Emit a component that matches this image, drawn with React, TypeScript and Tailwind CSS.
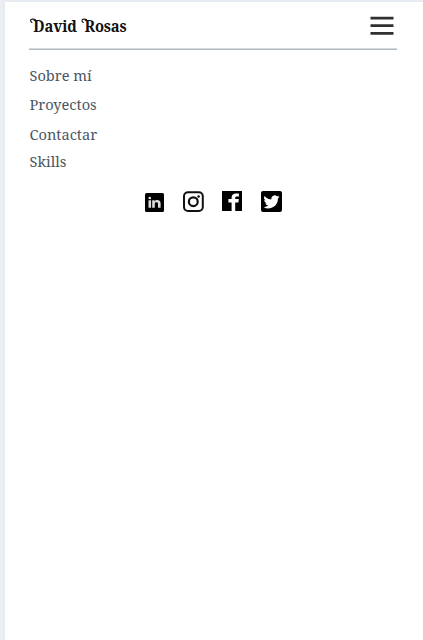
const links = [
  { label: 'Sobre mí', box: 'h-[29px]' },
  { label: 'Proyectos', box: 'h-[30px]' },
  { label: 'Contactar', box: 'h-[27px]' },
  { label: 'Skills', box: 'h-[29px]' },
];

function Menu() {
  return (
    <svg className="h-5 w-6" viewBox="0 0 24 20" stroke="#303030" strokeWidth="2.7" aria-hidden="true">
      <path d="M.5 2.2h23M.5 9.7h23M.5 17.3h23" />
    </svg>
  );
}

function Flourish() {
  return (
    <svg className="absolute top-[3px] left-0 h-[6px] w-[7px]" viewBox="0 0 7 6" fill="none" stroke="#111" strokeWidth="1.3" strokeLinecap="round" aria-hidden="true">
      <path d="M6.3 1.5C4 .8.8.7.8 2.6c0 1 .8 1.6 1.5 1.7" />
    </svg>
  );
}

function LinkedIn() {
  return (
    <svg className="mt-[2px] h-[19px] w-[19px]" viewBox="0 0 19 19" aria-label="LinkedIn">
      <rect width="19" height="19" rx="1.5" />
      <g fill="#ddd">
        <circle cx="4.8" cy="5" r="1.35" />
        <path d="M3.5 7.2h2.6v7.6H3.5zM7.2 7.2h2.4v1c1.3-1.8 6-1.7 6 2v4.6h-2.6v-4c0-2-3.2-1.9-3.2 0v4H7.2z" />
      </g>
    </svg>
  );
}

function Instagram() {
  return (
    <svg className="h-[21px] w-[21px]" viewBox="0 0 21 21" fill="none" stroke="#111" aria-label="Instagram">
      <rect x="1" y="1.2" width="18.8" height="18.8" rx="4" strokeWidth="2" />
      <circle cx="10.3" cy="10.7" r="4.4" strokeWidth="2.2" />
      <circle cx="15.6" cy="5.5" r="1.3" fill="#111" stroke="none" />
    </svg>
  );
}

function Facebook() {
  return (
    <svg className="h-5 w-5" viewBox="0 0 20 20" aria-label="Facebook">
      <rect width="20" height="20" />
      <path fill="#fff" d="M9.6 20v-8.6H6.4V8h3.2V6.7c0-2.9 1.9-4.2 4.3-4.2h3v3.1h-2c-1.3 0-1.7.5-1.7 1.5V8h3.6l-.4 3.4h-3.2V20z" />
    </svg>
  );
}

function Twitter() {
  return (
    <svg className="h-[21px] w-[21px]" viewBox="0 0 21 21" aria-label="Twitter">
      <rect width="21" height="21" rx="2" />
      <path
        fill="#fff"
        transform="translate(2.5 2.8) scale(.67)"
        d="M23.95 4.57a10 10 0 0 1-2.82.77 4.96 4.96 0 0 0 2.16-2.72 9.9 9.9 0 0 1-3.13 1.18 4.92 4.92 0 0 0-8.38 4.48A13.9 13.9 0 0 1 1.64 3.16a4.92 4.92 0 0 0 1.52 6.57 4.9 4.9 0 0 1-2.23-.61v.06a4.92 4.92 0 0 0 3.95 4.83 5 5 0 0 1-2.21.08 4.94 4.94 0 0 0 4.6 3.42A9.87 9.87 0 0 1 0 19.54a13.99 13.99 0 0 0 21.5-12.4 9.8 9.8 0 0 0 2.45-2.57z"
      />
    </svg>
  );
}

export default function App() {
  return (
    <div className="h-screen overflow-hidden bg-[#ebeff4] pt-[2px] pl-[5px]">
      <main className="h-full bg-white pr-[26px] pl-6 shadow-[0_0_3px_#dce2e9]">
        <header className="flex h-12 items-start justify-between border-b border-[#b4bbc0] pt-[14px] shadow-[inset_0_-1px_0_#d5dade]">
          <h1 className="-mt-px flex origin-left scale-x-[0.87] gap-[5px] pl-px font-['Noto_Serif',serif] text-[17px] leading-[21px] font-bold tracking-[-0.15px] text-[#111]">
            <span className="relative pl-1"><Flourish />David</span>{' '}
            <span className="relative pl-1"><Flourish />Rosas</span>
          </h1>
          <button aria-label="Menu" className="mr-[3px] flex">
            <Menu />
          </button>
        </header>
        <nav className="flex flex-col items-start pt-[15px] pl-[0.5px] font-['Noto_Serif','DejaVu_Serif_Condensed','DejaVu_Serif',serif] text-[14.6px] leading-5 text-[#4c5662]">
          {links.map(({ label, box }) => (
            <a key={label} className={box}>{label}</a>
          ))}
        </nav>
        <div className="flex items-start pt-[11px] pl-[116px]">
          <LinkedIn />
          <span className="ml-[19px]"><Instagram /></span>
          <span className="ml-[18px]"><Facebook /></span>
          <span className="ml-[19px]"><Twitter /></span>
        </div>
      </main>
    </div>
  );
}
